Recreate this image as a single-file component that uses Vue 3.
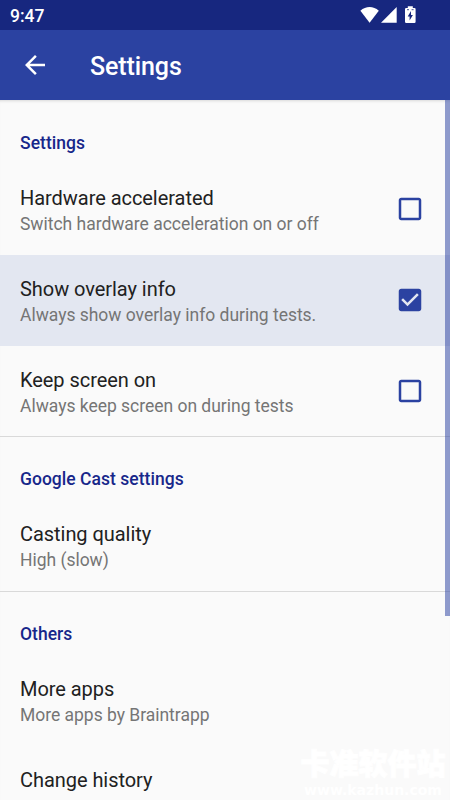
<script setup>
import { ref } from 'vue'

const groups = ref([
  {
    title: 'Settings',
    items: [
      { title: 'Hardware accelerated', summary: 'Switch hardware acceleration on or off', checked: false },
      { title: 'Show overlay info', summary: 'Always show overlay info during tests.', checked: true, active: true },
      { title: 'Keep screen on', summary: 'Always keep screen on during tests', checked: false },
    ],
  },
  {
    title: 'Google Cast settings',
    items: [{ title: 'Casting quality', summary: 'High (slow)' }],
  },
  {
    title: 'Others',
    items: [
      { title: 'More apps', summary: 'More apps by Braintrapp' },
      { title: 'Change history', summary: '' },
    ],
  },
])

function toggle(item) {
  if (item.checked !== undefined) item.checked = !item.checked
}
</script>

<template>
  <div class="screen">
    <div class="status">
      <span class="clock">9:47</span>
      <svg class="indicators" width="60" height="20" viewBox="0 0 60 20" fill="#fff">
        <path d="M0.4 5.7C5.8 0.9 13.4 0.9 18.8 5.7L9.6 17.8Z" />
        <path d="M36.7 2.1V17.8H21Z" />
        <path fill-rule="evenodd" d="M47.8 1.2h5v1.700h1.600q1.200 0 1.200 1.200v12.700q0 1.200-1.200 1.200h-8.200q-1.200 0-1.200-1.200V4.100q0-1.200 1.200-1.200h1.600zM51 6l-3.300 5.500h1.900v4l3.300-5.500H51z" />
        <path d="M47 4.700h2M51.600 4.700h2" stroke="#17277f" stroke-width=".8" />
      </svg>
    </div>
    <header class="toolbar">
      <svg class="back" width="30" height="30" viewBox="0 0 24 24" fill="#fff">
        <path d="M20 11H7.830l5.590-5.590L12 4l-8 8 8 8 1.410-1.410L7.830 13H20v-2z" />
      </svg>
      <h1>Settings</h1>
    </header>
    <main class="content">
      <section v-for="group in groups" :key="group.title" class="group">
        <h2>{{ group.title }}</h2>
        <div
          v-for="item in group.items"
          :key="item.title"
          class="row"
          :class="{ active: item.active }"
          @click="toggle(item)"
        >
          <div class="labels">
            <div class="title">{{ item.title }}</div>
            <div v-if="item.summary" class="summary">{{ item.summary }}</div>
          </div>
          <svg v-if="item.checked !== undefined" class="check" width="30" height="30" viewBox="0 0 24 24" fill="#2b42a1">
            <path
              v-if="item.checked"
              d="M19 3H5c-1.110 0-2 .9-2 2v14c0 1.100.890 2 2 2h14c1.110 0 2-.9 2-2V5c0-1.100-.890-2-2-2zm-9 14l-5-5 1.410-1.410L10 14.170l7.590-7.590L19 8l-9 9z"
            />
            <path
              v-else
              d="M19 5v14H5V5h14m0-2H5c-1.100 0-2 .9-2 2v14c0 1.100.9 2 2 2h14c1.100 0 2-.9 2-2V5c0-1.100-.9-2-2-2z"
            />
          </svg>
        </div>
      </section>
      <div class="scrollbar"></div>
      <div class="watermark">
        <div class="mark-name">卡准软件站</div>
        <div class="mark-url">www.kazhun.com</div>
      </div>
    </main>
  </div>
</template>

<style>
body {
  margin: 0;
}
</style>

<style scoped>
.screen {
  width: 450px;
  height: 800px;
  display: flex;
  flex-direction: column;
  overflow: hidden;
  background: #fafafa;
  font-family: Roboto, sans-serif;
}
.status {
  flex: none;
  height: 30px;
  box-sizing: border-box;
  padding: 0 30px 0 10px;
  display: flex;
  justify-content: space-between;
  background: #17277f;
  color: #fff;
}
.clock {
  font-size: 17.5px;
  font-weight: 500;
  line-height: 32px;
}
.indicators {
  margin-top: 5px;
}
.toolbar {
  flex: none;
  height: 70px;
  box-sizing: border-box;
  padding-left: 20px;
  display: flex;
  align-items: center;
  gap: 40px;
  background: #2b42a1;
  color: #fff;
}
h1 {
  margin: 4px 0 0;
  font-size: 25px;
  font-weight: 500;
  line-height: 30px;
  letter-spacing: -0.1px;
}
.content {
  position: relative;
  flex: 1;
  min-height: 0;
  overflow: hidden;
  box-shadow: inset 0 3px 3px -2px #d8d8d8;
}
.group + .group {
  border-top: 1px solid #d9d9d9;
}
h2 {
  margin: 0;
  height: 64px;
  box-sizing: border-box;
  padding: 32px 20px 0;
  font-size: 17.5px;
  font-weight: 500;
  line-height: 22px;
  letter-spacing: 0.03px;
  color: #17278a;
}
.group + .group h2 {
  height: 63px;
  padding-top: 31px;
}
.row {
  height: 90.75px;
  box-sizing: border-box;
  padding: 22px 25px 0 20px;
  display: flex;
  justify-content: space-between;
}
.row.active {
  background: #e3e7f1;
}
.title {
  font-size: 20px;
  line-height: 25px;
  letter-spacing: -0.05px;
  color: #212121;
}
.summary {
  font-size: 17.5px;
  line-height: 26.6px;
  letter-spacing: -0.02px;
  color: #757575;
}
.check {
  margin-top: 8px;
}
.scrollbar {
  position: absolute;
  top: 0;
  right: 0;
  width: 5px;
  height: 516px;
  background: rgba(43, 66, 161, 0.52);
}
.watermark {
  position: absolute;
  right: 2px;
  bottom: 1px;
  width: 150px;
  color: #fff;
  text-align: center;
  white-space: nowrap;
  pointer-events: none;
}
.mark-name {
  font-family: "Noto Sans CJK SC", sans-serif;
  font-size: 29px;
  font-weight: 900;
  line-height: 30px;
  margin-bottom: 5px;
  -webkit-text-stroke: 1px #fff;
}
.mark-url {
  font-family: "DejaVu Sans", sans-serif;
  font-size: 14px;
  font-weight: 700;
  line-height: 17px;
}
</style>
